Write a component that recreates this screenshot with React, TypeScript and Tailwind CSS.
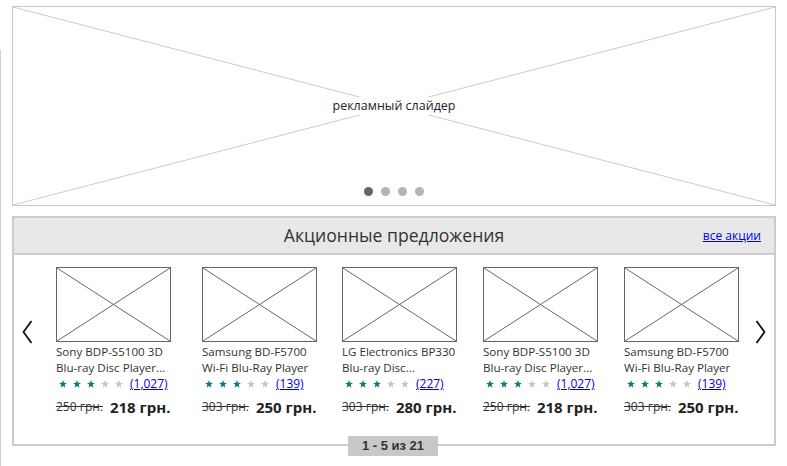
type Product = {
  lines: [string, string];
  reviews: string;
  oldPrice: string;
  price: string;
};

const products: Product[] = [
  { lines: ["Sony BDP-S5100 3D", "Blu-ray Disc Player..."], reviews: "(1,027)", oldPrice: "250 грн.", price: "218 грн." },
  { lines: ["Samsung BD-F5700", "Wi-Fi Blu-Ray Player"], reviews: "(139)", oldPrice: "303 грн.", price: "250 грн." },
  { lines: ["LG Electronics BP330", "Blu-ray Disc..."], reviews: "(227)", oldPrice: "303 грн.", price: "280 грн." },
  { lines: ["Sony BDP-S5100 3D", "Blu-ray Disc Player..."], reviews: "(1,027)", oldPrice: "250 грн.", price: "218 грн." },
  { lines: ["Samsung BD-F5700", "Wi-Fi Blu-Ray Player"], reviews: "(139)", oldPrice: "303 грн.", price: "250 грн." },
];

const Cross = ({ color }: { color: string }) => (
  <svg className="absolute inset-0 h-full w-full" preserveAspectRatio="none" viewBox="0 0 100 100">
    <line x1="0" y1="0" x2="100" y2="100" stroke={color} strokeWidth="1" vectorEffect="non-scaling-stroke" />
    <line x1="100" y1="0" x2="0" y2="100" stroke={color} strokeWidth="1" vectorEffect="non-scaling-stroke" />
  </svg>
);

const Star = ({ on }: { on: boolean }) => (
  <svg width="8" height="8" viewBox="0 0 10 10">
    <polygon
      points="5,0 6.2,3.5 10,3.6 7,5.9 8.1,9.6 5,7.4 1.9,9.6 3,5.9 0,3.6 3.8,3.5"
      fill={on ? "#0a7b7b" : "#c4c4c4"}
    />
  </svg>
);

const Chevron = ({ dir }: { dir: "left" | "right" }) => (
  <svg width="11" height="24" viewBox="0 0 11 24">
    <polyline
      points={dir === "left" ? "9.5,1 1.5,12 9.5,23" : "1.5,1 9.5,12 1.5,23"}
      fill="none"
      stroke="#111"
      strokeWidth="1.8"
    />
  </svg>
);

const ProductCard = ({ p }: { p: Product }) => (
  <div className="w-[115px]">
    <div className="relative h-[75px] w-[115px] border border-[#666]">
      <Cross color="#666" />
    </div>
    <div className="mt-[2px] text-[11.6px] leading-[16px] text-[#333] whitespace-nowrap">
      <div>{p.lines[0]}</div>
      <div>{p.lines[1]}</div>
      <div className="flex items-center pl-[3px]">
        <div className="flex items-center gap-[6px]">
          {[0, 1, 2, 3, 4].map((i) => (
            <Star key={i} on={i < 3} />
          ))}
        </div>
        <a href="#" className="ml-[7px] text-[12px] text-[#0000ee] underline">
          {p.reviews}
        </a>
      </div>
    </div>
    <div className="mt-[5px] flex items-center whitespace-nowrap leading-[20px]">
      <span className="text-[12px] text-[#333] line-through">{p.oldPrice}</span>
      <span className="ml-[7px] text-[15px] font-bold text-[#222]">{p.price}</span>
    </div>
  </div>
);

export default function App() {
  return (
    <div
      className="flex h-[466px] w-[787px] bg-white"
      style={{ fontFamily: '"Open Sans", "Noto Sans", sans-serif' }}
    >
      <div className="mt-[50px] w-px bg-[#cfcfcf]" />
      <div className="ml-[11px] pt-[6px]">
        {/* slider */}
        <div className="relative flex h-[200px] w-[764px] items-center justify-center border border-[#c8c8c8]">
          <Cross color="#cccccc" />
          <span className="relative bg-white text-[12.5px] leading-[18px] text-[#222]">рекламный слайдер</span>
          <div className="absolute bottom-[9px] left-1/2 flex -translate-x-1/2 gap-2">
            <span className="h-[9px] w-[9px] rounded-full bg-[#666]" />
            <span className="h-[9px] w-[9px] rounded-full bg-[#b4b4b4]" />
            <span className="h-[9px] w-[9px] rounded-full bg-[#b4b4b4]" />
            <span className="h-[9px] w-[9px] rounded-full bg-[#b4b4b4]" />
          </div>
        </div>

        {/* promo block */}
        <div className="relative mt-[10px] h-[230px] w-[764px] border-2 border-[#cccccc]">
          <div className="relative flex h-[37px] items-center justify-center border-b-2 border-[#cccccc] bg-[#e8e8e8]">
            <h2 className="text-[17.6px] text-[#333]">Акционные предложения</h2>
            <a href="#" className="absolute right-[13px] text-[12px] text-[#0000ee] underline">
              все акции
            </a>
          </div>
          <div className="flex items-start pt-[12px]">
            <div className="w-[42px] pl-[8px] pt-[53px]">
              <Chevron dir="left" />
            </div>
            <div className="grid grid-cols-[146px_140px_141px_141px_115px]">
              {products.map((p, i) => (
                <ProductCard key={i} p={p} />
              ))}
            </div>
            <div className="flex flex-1 justify-end pr-[8px] pt-[53px]">
              <Chevron dir="right" />
            </div>
          </div>
          <div
            className="absolute bottom-[-12px] left-[334px] flex h-[20px] w-[90px] items-center justify-center bg-[#c8c8c8] text-[13px] font-bold text-[#333]"
            style={{ fontFamily: '"Liberation Sans", Arial, sans-serif' }}
          >
            1 - 5 из 21
          </div>
        </div>
      </div>
    </div>
  );
}
